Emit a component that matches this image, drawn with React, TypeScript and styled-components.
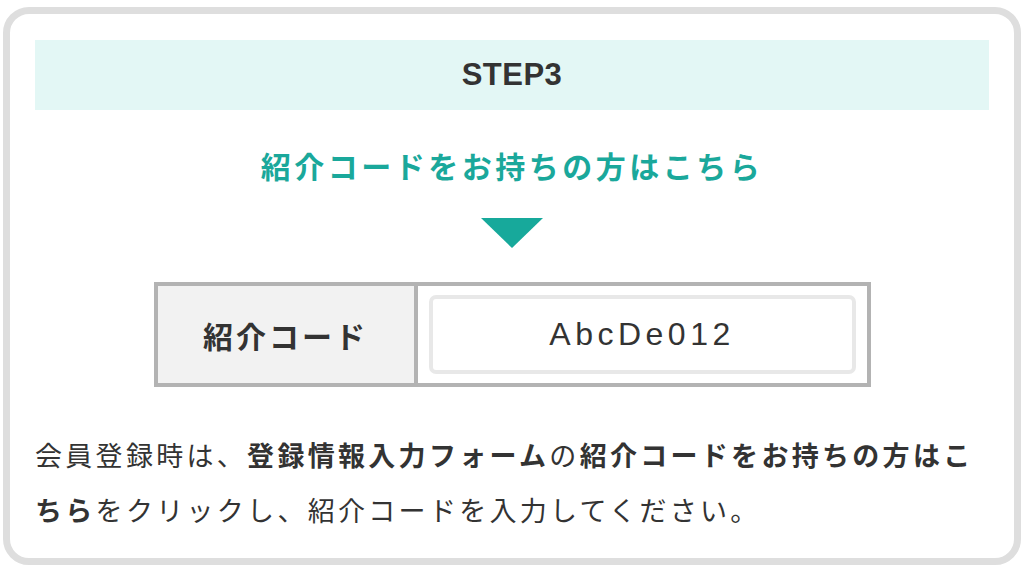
import styled, { createGlobalStyle } from 'styled-components';

const GlobalStyle = createGlobalStyle`
  html, body {
    margin: 0;
    padding: 0;
    background: #ffffff;
  }
  body {
    font-family: 'Noto Sans CJK JP', 'Noto Sans', sans-serif;
    color: #333333;
  }
`;

export default function App() {
  return (
    <Page>
      <GlobalStyle />
      <Card>
        <StepBand>STEP3</StepBand>
        <Lead>紹介コードをお持ちの方はこちら</Lead>
        <Arrow />
        <CodeTable>
          <LabelCell>紹介コード</LabelCell>
          <ValueCell>
            <CodeBox>AbcDe012</CodeBox>
          </ValueCell>
        </CodeTable>
        <Note>
          会員登録時は、<b>登録情報入力フォーム</b>の
          <b>紹介コードをお持ちの方はこちら</b>をクリックし、紹介コードを入力してください。
        </Note>
      </Card>
    </Page>
  );
}

const Page = styled.div`
  width: 1024px;
  height: 573px;
  padding: 7px 3px 8px;
  box-sizing: border-box;
`;
const Card = styled.div`
  height: 558px;
  box-sizing: border-box;
  border: 7px solid #dedede;
  border-radius: 26px;
  padding: 26px 25px 0;
  display: flex;
  flex-direction: column;
  align-items: center;
`;
const StepBand = styled.div`
  align-self: stretch;
  height: 70px;
  background: #e3f7f5;
  display: flex;
  align-items: center;
  justify-content: center;
  font-family: 'Liberation Sans', Arial, sans-serif;
  font-size: 31px;
  font-weight: 700;
  letter-spacing: 0.5px;
  color: #333333;
`;
const Lead = styled.div`
  margin-top: 35px;
  line-height: 40px;
  font-size: 30px;
  font-weight: 700;
  letter-spacing: 3.5px;
  color: #1aa89b;
`;
const Arrow = styled.div`
  margin-top: 33px;
  width: 0;
  height: 0;
  border-left: 31px solid transparent;
  border-right: 31px solid transparent;
  border-top: 30px solid #17a99b;
`;
const CodeTable = styled.div`
  margin-top: 34px;
  width: 717px;
  height: 105px;
  box-sizing: border-box;
  border: 4px solid #b3b3b3;
  display: flex;
`;
const LabelCell = styled.div`
  width: 256px;
  border-right: 4px solid #b3b3b3;
  background: #f2f2f2;
  display: flex;
  align-items: center;
  justify-content: center;
  font-size: 30px;
  font-weight: 700;
  letter-spacing: 3px;
  color: #333333;
`;
const ValueCell = styled.div`
  flex: 1;
  padding: 9px 11px;
  display: flex;
`;
const CodeBox = styled.div`
  flex: 1;
  border: 4px solid #e8e8e8;
  border-radius: 7px;
  display: flex;
  align-items: center;
  justify-content: center;
  font-family: 'Liberation Sans', Arial, sans-serif;
  font-size: 32px;
  letter-spacing: 4.5px;
  color: #333333;
`;
const Note = styled.p`
  align-self: stretch;
  margin: 40px 0 0;
  font-size: 27px;
  line-height: 55px;
  letter-spacing: 3.3px;
  color: #333333;
  b {
    font-weight: 700;
  }
`;
